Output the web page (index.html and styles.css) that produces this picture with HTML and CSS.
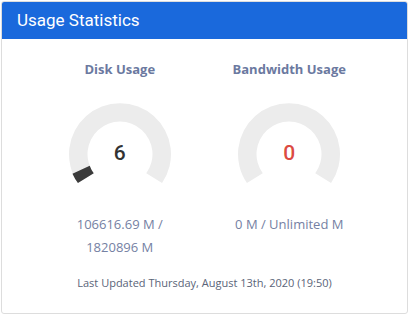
FILE: index.html
```html
<!DOCTYPE html>
<html lang="en">
<head>
    <meta charset="UTF-8">
    <meta name="viewport" content="width=device-width, initial-scale=1.0">
    <title>Usage Statistics</title>
    <link rel="stylesheet" href="styles.css">
</head>
<body>

<div class="card">
    <div class="card-header">Usage Statistics</div>
    <div class="card-body">
        <div class="stats">
            <div class="stat">
                <h4>Disk Usage</h4>
                <div class="gauge">
                    <svg width="104" height="92" viewBox="0 0 104 92">
                        <path class="track" d="M 9.93 80.04 A 51 51 0 1 1 94.07 80.04 L 78.25 70.27 A 32.5 32.5 0 1 0 25.75 70.27 Z"/>
                        <path class="fill" d="M 9.93 80.04 A 51 51 0 0 1 4.44 70.72 L 21.70 62.64 A 32 32 0 0 0 25.75 70.27 Z"/>
                    </svg>
                    <span class="value">6</span>
                </div>
                <p class="amount">106616.69 M / 1820896&nbsp;M</p>
            </div>
            <div class="stat">
                <h4>Bandwidth Usage</h4>
                <div class="gauge">
                    <svg width="104" height="92" viewBox="0 0 104 92">
                        <path class="track" d="M 9.93 80.04 A 51 51 0 1 1 94.07 80.04 L 78.25 70.27 A 32.5 32.5 0 1 0 25.75 70.27 Z"/>
                    </svg>
                    <span class="value red">0</span>
                </div>
                <p class="amount">0 M / Unlimited M</p>
            </div>
        </div>
        <p class="updated">Last Updated Thursday, August 13th, 2020 (19:50)</p>
    </div>
</div>

</body>
</html>
```

FILE: styles.css
```css
body {
    font-family: "Open Sans", Lato, sans-serif;
    background-color: #fff;
    margin: 0;
    padding: 1px 2px 0 1px;
}
.card {
    border: 1px solid #ddd;
    border-radius: 3px;
    background-color: #fff;
    height: 313px;
    box-sizing: border-box;
    overflow: hidden;
}
.card-header {
    background-color: #1a69dc;
    color: #fff;
    font-family: Roboto, sans-serif;
    font-size: 17px;
    height: 37px;
    line-height: 37px;
    padding: 0 15px;
}
.card-body {
    padding: 0 33px;
}
.stats {
    display: grid;
    grid-template-columns: 1fr 1fr;
}
.stat {
    text-align: center;
    padding: 0 14px;
}
.stat h4 {
    margin: 21px 0 0;
    font-size: 13px;
    font-weight: bold;
    color: #6b79a0;
    line-height: 18px;
}
.gauge {
    position: relative;
    width: 104px;
    height: 92px;
    margin: 25px auto 0;
}
.gauge svg {
    display: block;
}
.track {
    fill: #ececec;
}
.fill {
    fill: #3b3b3b;
}
.value {
    position: absolute;
    left: 0;
    right: 0;
    top: 38px;
    font-family: Roboto, sans-serif;
    font-size: 21px;
    font-weight: 500;
    color: #333;
    line-height: 24px;
}
.value.red {
    color: #dc4b42;
}
.amount {
    margin: 18px 0 0;
    font-size: 13px;
    line-height: 23px;
    color: #7581a3;
}
.updated {
    margin: 17px 0 0;
    text-align: center;
    font-size: 11px;
    line-height: 14px;
    color: #5a6478;
}
```
